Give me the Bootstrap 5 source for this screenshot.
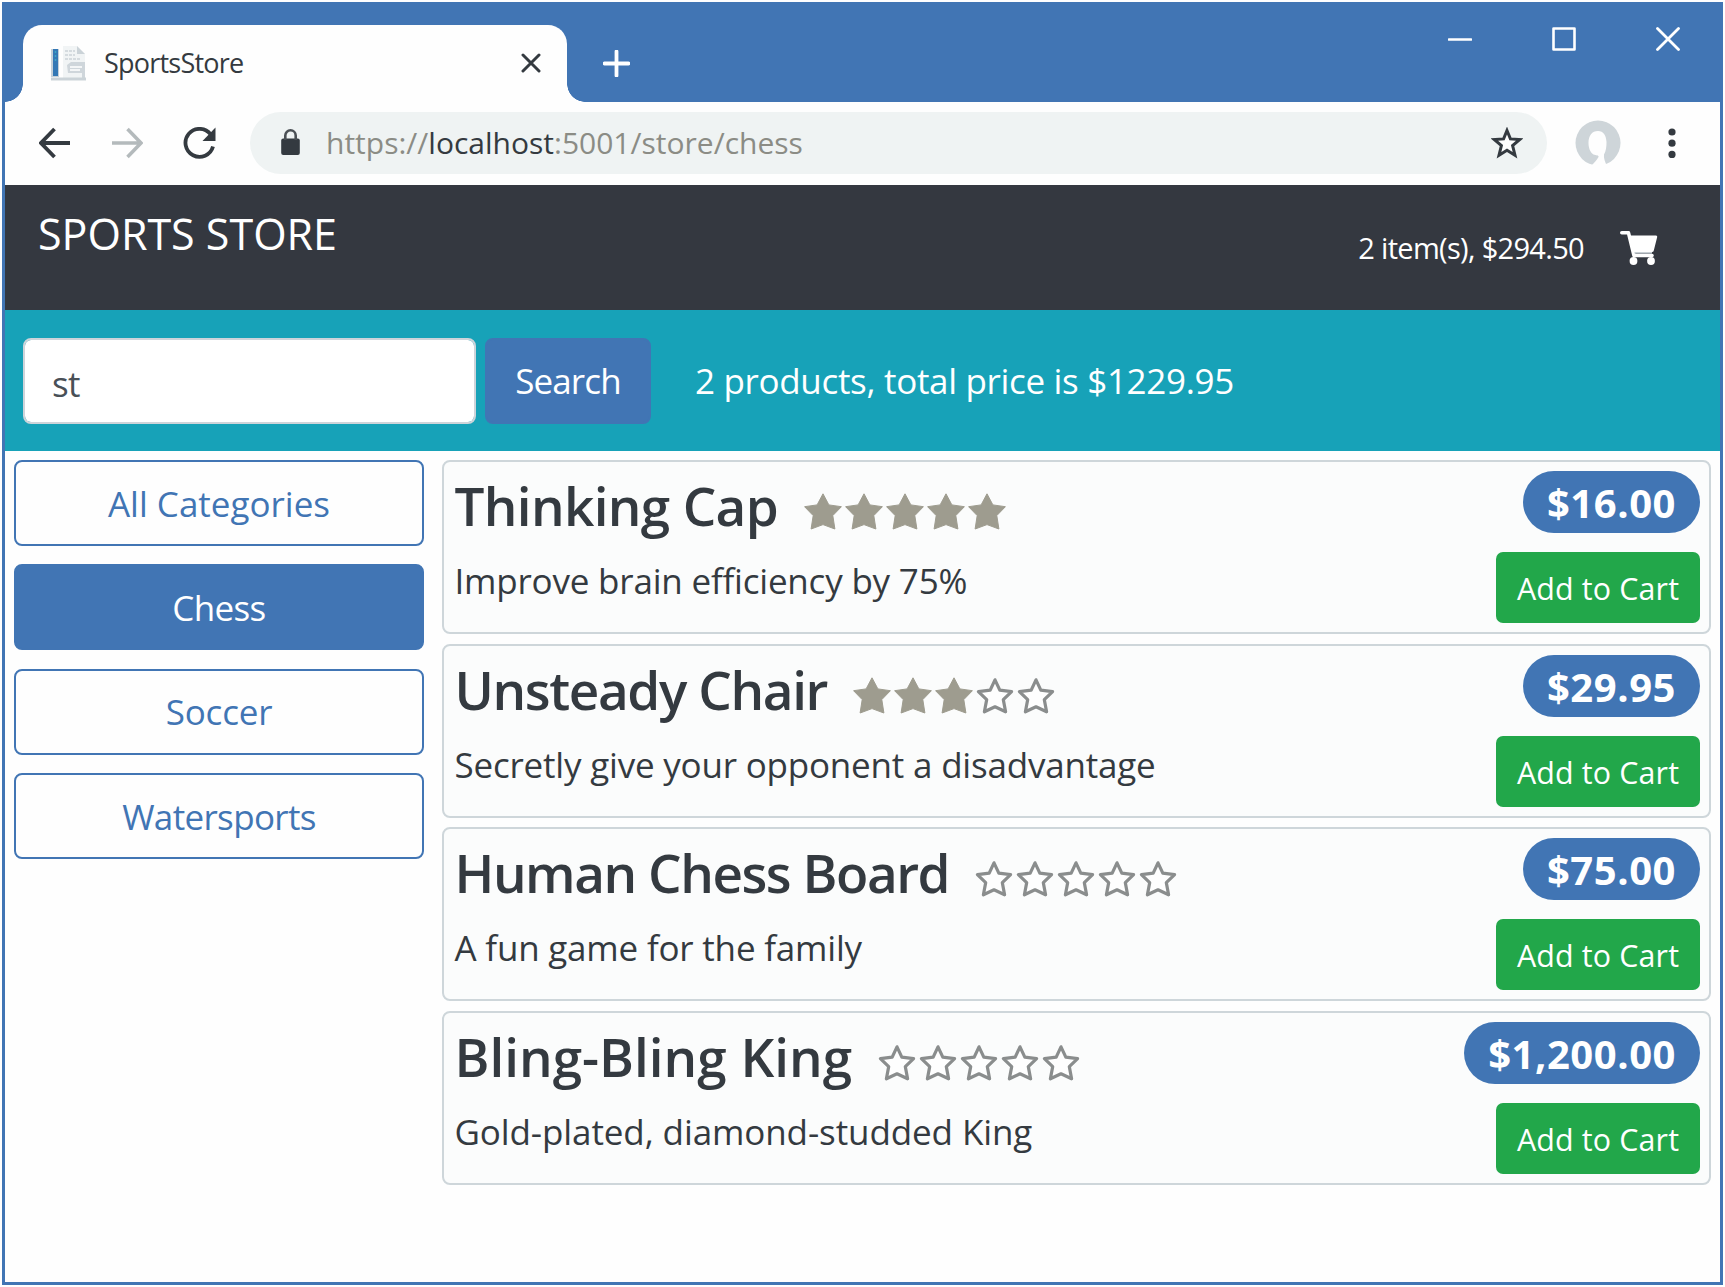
<!DOCTYPE html>
<html lang="en">
<head>
<meta charset="utf-8">
<meta name="viewport" content="width=device-width, initial-scale=1">
<title>SportsStore</title>
<link rel="stylesheet" href="https://cdn.jsdelivr.net/npm/bootstrap@5.3.0/dist/css/bootstrap.min.css">
<style>
:root{--brand:#4175b4;--ink:#343a40;}
body{font-family:"Open Sans","Noto Sans",sans-serif;color:var(--ink);background:#fefefe;}
svg{flex:none;display:block;}
.win{width:1721px;height:1283px;margin:2px;border:3px solid var(--brand);background:#fefefe;}

/* browser chrome */
.titlebar{height:97px;background:var(--brand);}
.tab{width:544px;height:77px;margin-left:18px;padding:0 26px 2px 27px;background:#fefefe;border-radius:19px 19px 0 0;}
.tab::before,.tab::after{content:"";position:absolute;bottom:0;width:18px;height:18px;}
.tab::before{left:-18px;background:radial-gradient(circle at 0 0,transparent 17.5px,#fefefe 18px);}
.tab::after{right:-18px;background:radial-gradient(circle at 100% 0,transparent 17.5px,#fefefe 18px);}
.tabtitle{font-size:27px;margin-left:17px;line-height:1;letter-spacing:-.78px;}
.newtab{margin:0 0 25px 36px;}
.winctl{height:67px;gap:80px;padding-right:40px;}
.toolbar{height:83px;padding:0 0 2px 34px;}
.navgap{gap:40px;}
.urlbar{width:1297px;height:62px;border-radius:31px;background:#eff3f3;padding:0 24px 0 31px;margin:0 28px 0 34px;}
.urltext{font-size:30px;color:#8b8c85;margin-left:26px;}
.urltext b{font-weight:400;color:var(--ink);}
.kebab{margin-left:46px;}

/* store header and search */
.storehead{height:125px;background:#343840;padding:24px 62px 0 33px;color:#fff;}
.brandname{font-size:43px;line-height:50px;}
.cartlink{gap:36px;height:78px;}
.cartsum{font-size:29px;line-height:40px;letter-spacing:-.68px;}
.searchbar{height:141px;background:#17a2b8;padding:0 18px;}
.searchbar .form-control{width:453px;height:86px;font-size:35px;letter-spacing:-.6px;padding:6px 27px 0;border:2px solid #ced4da;border-radius:8px;color:#495057;}
.searchbar .btn{width:166px;height:86px;font-size:35px;letter-spacing:-.85px;border-radius:8px;margin-left:9px;padding:2px 0 0;}
.btn-brand,.btn-brand:hover{background:var(--brand);color:#fff;border:2px solid var(--brand);}
.btn-line,.btn-line:hover{background:#fefefe;color:var(--brand);border:2px solid var(--brand);}
.summary{font-size:35px;letter-spacing:-.32px;color:#fff;margin-left:44px;padding-top:2px;}

/* categories and products */
.store{padding:9px 9px 0 9px;}
.cats{width:410px;gap:18.3px;margin-right:18px;}
.cats .btn{height:86px;font-size:35px;border-radius:8px;padding:2px 0 0;letter-spacing:-.65px;}
.cats .btn:first-child{letter-spacing:0;}
.cats .btn:nth-child(3){letter-spacing:-.2px;}
.items{gap:9.6px;}
.item{height:174px;border:2px solid #ced6da;border-radius:8px;background:#fbfcfc;padding:9px 9px 9px 10.5px;}
.item h2{font-size:53px;font-weight:600;line-height:64px;margin:3px 26px 0 0;letter-spacing:-.65px;}
.item:nth-child(2) h2{letter-spacing:-1.38px;}
.item:nth-child(3) h2{letter-spacing:-1.45px;}
.item:nth-child(4) h2{letter-spacing:0;}
.item p{font-size:35px;line-height:48px;margin:19px 0 0;letter-spacing:-.2px;}
.item:nth-child(4) p{letter-spacing:-.1px;}
.stars{gap:3px;padding-top:14px;}
.price{font-size:40px;font-weight:700;line-height:62px;height:62px;padding:1px 24px 0 24px;background:var(--brand);color:#fff;border-radius:31px;letter-spacing:.55px;}
.item .btn,.item .btn:hover{width:204px;height:71px;font-size:30.4px;letter-spacing:.15px;background:#22a74a;color:#fff;border:0;border-radius:7px;padding:3px 0 0;}
</style>
<script src="https://cdn.jsdelivr.net/npm/bootstrap@5.3.0/dist/js/bootstrap.bundle.min.js"></script>
</head>
<body>
<svg class="d-none" xmlns="http://www.w3.org/2000/svg">
<symbol id="full" viewBox="0 0 38 37"><path d="M19 .8 24.900 11.900 37.400 13.700 28.800 22.600 30.900 36 19 31.600 7.100 36 9.200 22.600.6 13.700 13.100 11.900z" fill="#9e9c8f" stroke="#9e9c8f" stroke-linejoin="round"/></symbol>
<symbol id="open" viewBox="0 0 38 37"><path d="M19 2.800 23.800 13.200 35.600 14.600 27.300 22.600 29.600 34.800 19 29.800 8.400 34.800 10.700 22.600 2.400 14.600 14.200 13.200z" fill="#fefefe" stroke="#8a8d8d" stroke-width="3.200" stroke-linejoin="round"/></symbol>
</svg>
<div class="win overflow-hidden">
  <div class="titlebar d-flex align-items-end">
    <div class="tab position-relative d-flex align-items-center">
      <svg width="37" height="36" viewBox="0 0 37 36"><path d="M13 1H27L35 9V34H13z" fill="#f1f4f5"/><path d="M27 1 35 9H27z" fill="#cbd3d8"/><path d="M15 6H25M15 10H25M15 14H30" stroke="#d5dbdf" stroke-width="2" stroke-dasharray="3 1"/><path d="M17 20 21 17H35V34H32V28H18z" fill="#cfd6db"/><path d="M20 22H32M20 25H30" stroke="#f4f6f7" stroke-width="2"/><path d="M1 34H36" stroke="#cbd3d8" stroke-width="3"/><path d="M1 4H9V32H1z" fill="#c5d0d8"/><path d="M3 4H8V31H3z" fill="#3478b5"/><path d="M5.500 6V16" stroke="#39a5c4" stroke-width="1.500" stroke-dasharray="2 2"/></svg>
      <span class="tabtitle">SportsStore</span>
      <svg class="ms-auto" width="20" height="20" viewBox="0 0 20 20"><path d="M2 2 18 18M18 2 2 18" stroke="#343a40" stroke-width="3" stroke-linecap="round"/></svg>
    </div>
    <svg class="newtab" width="27" height="27" viewBox="0 0 27 27"><path d="M13.500 1.500V25.500M1.500 13.500H25.500" stroke="#fff" stroke-width="3.800" stroke-linecap="round"/></svg>
    <div class="winctl d-flex align-items-center align-self-start ms-auto">
      <svg width="24" height="24" viewBox="0 0 24 24"><path d="M1 12.500H23" stroke="#fff" stroke-width="2.600" stroke-linecap="round"/></svg>
      <svg width="24" height="24" viewBox="0 0 24 24"><rect x="1.500" y="1.500" width="21" height="21" fill="none" stroke="#fff" stroke-width="2.600" stroke-linejoin="round"/></svg>
      <svg width="24" height="24" viewBox="0 0 24 24"><path d="M1.500 1.500 22.500 22.500M22.500 1.500 1.500 22.500" stroke="#fff" stroke-width="2.800" stroke-linecap="round"/></svg>
    </div>
  </div>
  <div class="toolbar d-flex align-items-center">
    <div class="navgap d-flex">
      <svg width="32" height="32" viewBox="0 0 32 32"><path d="M15.500 2 2 16 15.500 30M2 16H31" fill="none" stroke="#343a40" stroke-width="3.800"/></svg>
      <svg width="32" height="32" viewBox="0 0 32 32"><path d="M16.500 2 30 16 16.500 30M30 16H1" fill="none" stroke="#b4babc" stroke-width="3.500"/></svg>
      <svg width="33" height="32" viewBox="0 0 33 32"><path d="M27.500 7.200A14 14 0 1 0 30 19.500" fill="none" stroke="#343a40" stroke-width="3.800"/><path d="M32.500.5V14H19.500z" fill="#343a40"/></svg>
    </div>
    <div class="urlbar d-flex align-items-center">
      <svg width="19" height="27" viewBox="0 0 19 27"><rect x=".2" y="9.500" width="18.600" height="16.500" rx="2" fill="#343a40"/><path d="M4.300 11V6.500a5.200 5.200 0 0 1 10.400 0V11" fill="none" stroke="#4b5055" stroke-width="2.600"/></svg>
      <span class="urltext">https://<b>localhost</b>:5001/store/chess</span>
      <svg class="ms-auto" width="32" height="32" viewBox="0 0 32 32"><path d="M16 3.500 19.400 11.900 28.800 12.500 21.600 18.500 24 28.200 16 23.200 8 28.200 10.400 18.500 3.200 12.500 12.600 11.900z" fill="#fefefe" stroke="#343a40" stroke-width="3"/></svg>
    </div>
    <svg width="46" height="46" viewBox="0 0 46 46"><circle cx="23" cy="23" r="22.500" fill="#ced5d9"/><path d="M23 11C17 11 13.500 15.500 13.500 23 13.500 29 16 33 18.500 34.500 21 35.500 24 35 23.500 37 22 40 19 43 16 46H32C30 42 28.500 38 29 34.500 31 31 31.500 27 31.500 22 31 15 28.500 11 23 11z" fill="#fefefe"/></svg>
    <svg class="kebab" width="10" height="32" viewBox="0 0 10 32"><g fill="#343a40"><circle cx="5" cy="5" r="3.600"/><circle cx="5" cy="16.200" r="3.600"/><circle cx="5" cy="27.400" r="3.600"/></g></svg>
  </div>
  <div class="storehead d-flex justify-content-between">
    <span class="brandname">SPORTS STORE</span>
    <div class="cartlink d-flex align-items-center">
      <span class="cartsum">2 item(s), $294.50</span>
      <svg width="38" height="34" viewBox="0 0 38 34"><path d="M1.800 1.800H8.500L14 24.500H32" fill="none" stroke="#fff" stroke-width="3.600" stroke-linecap="round" stroke-linejoin="round"/><path d="M9.500 4.500H36Q37.500 4.500 37.200 6L33.800 19.500Q33.500 21 32 21H13z" fill="#fff"/><path d="M14.500 21.800H32" stroke="#c9d0d5" stroke-width="1.600"/><circle cx="13.500" cy="30" r="3.900" fill="#fff"/><circle cx="31" cy="30" r="3.900" fill="#fff"/></svg>
    </div>
  </div>
  <form class="searchbar d-flex align-items-center">
    <input class="form-control" type="text" value="st" aria-label="Search text">
    <button class="btn btn-brand" type="button">Search</button>
    <span class="summary">2 products, total price is $1229.95</span>
  </form>
  <div class="store d-flex">
    <div class="cats d-flex flex-column">
      <button class="btn btn-line">All Categories</button>
      <button class="btn btn-brand">Chess</button>
      <button class="btn btn-line">Soccer</button>
      <button class="btn btn-line">Watersports</button>
    </div>
    <div class="items flex-fill d-flex flex-column">
      <div class="item d-flex justify-content-between">
        <div>
          <div class="d-flex align-items-start"><h2>Thinking Cap</h2><div class="stars d-flex align-self-center"><svg width="38" height="37"><use href="#full"/></svg><svg width="38" height="37"><use href="#full"/></svg><svg width="38" height="37"><use href="#full"/></svg><svg width="38" height="37"><use href="#full"/></svg><svg width="38" height="37"><use href="#full"/></svg></div></div>
          <p>Improve brain efficiency by 75%</p>
        </div>
        <div class="d-flex flex-column align-items-end justify-content-between"><div class="price">$16.00</div><button class="btn">Add to Cart</button></div>
      </div>
      <div class="item d-flex justify-content-between">
        <div>
          <div class="d-flex align-items-start"><h2>Unsteady Chair</h2><div class="stars d-flex align-self-center"><svg width="38" height="37"><use href="#full"/></svg><svg width="38" height="37"><use href="#full"/></svg><svg width="38" height="37"><use href="#full"/></svg><svg width="38" height="37"><use href="#open"/></svg><svg width="38" height="37"><use href="#open"/></svg></div></div>
          <p>Secretly give your opponent a disadvantage</p>
        </div>
        <div class="d-flex flex-column align-items-end justify-content-between"><div class="price">$29.95</div><button class="btn">Add to Cart</button></div>
      </div>
      <div class="item d-flex justify-content-between">
        <div>
          <div class="d-flex align-items-start"><h2>Human Chess Board</h2><div class="stars d-flex align-self-center"><svg width="38" height="37"><use href="#open"/></svg><svg width="38" height="37"><use href="#open"/></svg><svg width="38" height="37"><use href="#open"/></svg><svg width="38" height="37"><use href="#open"/></svg><svg width="38" height="37"><use href="#open"/></svg></div></div>
          <p>A fun game for the family</p>
        </div>
        <div class="d-flex flex-column align-items-end justify-content-between"><div class="price">$75.00</div><button class="btn">Add to Cart</button></div>
      </div>
      <div class="item d-flex justify-content-between">
        <div>
          <div class="d-flex align-items-start"><h2>Bling-Bling King</h2><div class="stars d-flex align-self-center"><svg width="38" height="37"><use href="#open"/></svg><svg width="38" height="37"><use href="#open"/></svg><svg width="38" height="37"><use href="#open"/></svg><svg width="38" height="37"><use href="#open"/></svg><svg width="38" height="37"><use href="#open"/></svg></div></div>
          <p>Gold-plated, diamond-studded King</p>
        </div>
        <div class="d-flex flex-column align-items-end justify-content-between"><div class="price">$1,200.00</div><button class="btn">Add to Cart</button></div>
      </div>
    </div>
  </div>
</div>
</body>
</html>
